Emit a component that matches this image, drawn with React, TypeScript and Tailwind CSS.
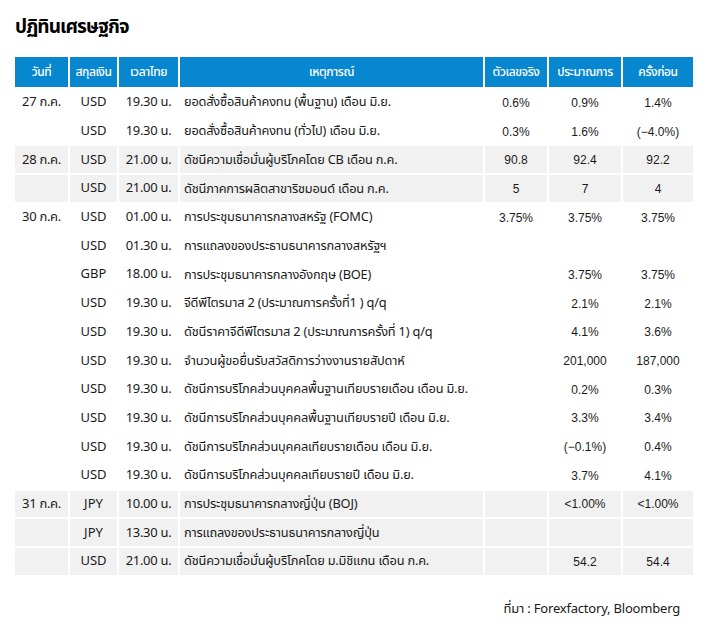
import React from 'react';

interface EventRow {
    date?: string;
    currency: string;
    time: string;
    event: string;
    actual?: string;
    forecast?: string;
    previous?: string;
}

interface DayGroup {
    shaded: boolean;
    rows: EventRow[];
}

const groups: DayGroup[] = [
    {
        shaded: false,
        rows: [
            { date: '27 ก.ค.', currency: 'USD', time: '19.30 น.', event: 'ยอดสั่งซื้อสินค้าคงทน (พื้นฐาน) เดือน มิ.ย.', actual: '0.6%', forecast: '0.9%', previous: '1.4%' },
            { currency: 'USD', time: '19.30 น.', event: 'ยอดสั่งซื้อสินค้าคงทน (ทั่วไป) เดือน มิ.ย.', actual: '0.3%', forecast: '1.6%', previous: '(−4.0%)' },
        ],
    },
    {
        shaded: true,
        rows: [
            { date: '28 ก.ค.', currency: 'USD', time: '21.00 น.', event: 'ดัชนีความเชื่อมั่นผู้บริโภคโดย CB เดือน ก.ค.', actual: '90.8', forecast: '92.4', previous: '92.2' },
            { currency: 'USD', time: '21.00 น.', event: 'ดัชนีภาคการผลิตสาขาริชมอนด์ เดือน ก.ค.', actual: '5', forecast: '7', previous: '4' },
        ],
    },
    {
        shaded: false,
        rows: [
            { date: '30 ก.ค.', currency: 'USD', time: '01.00 น.', event: 'การประชุมธนาคารกลางสหรัฐ (FOMC)', actual: '3.75%', forecast: '3.75%', previous: '3.75%' },
            { currency: 'USD', time: '01.30 น.', event: 'การแถลงของประธานธนาคารกลางสหรัฐฯ' },
            { currency: 'GBP', time: '18.00 น.', event: 'การประชุมธนาคารกลางอังกฤษ (BOE)', forecast: '3.75%', previous: '3.75%' },
            { currency: 'USD', time: '19.30 น.', event: 'จีดีพีไตรมาส 2 (ประมาณการครั้งที่1 ) q/q', forecast: '2.1%', previous: '2.1%' },
            { currency: 'USD', time: '19.30 น.', event: 'ดัชนีราคาจีดีพีไตรมาส 2 (ประมาณการครั้งที่ 1) q/q', forecast: '4.1%', previous: '3.6%' },
            { currency: 'USD', time: '19.30 น.', event: 'จำนวนผู้ขอยื่นรับสวัสดิการว่างงานรายสัปดาห์', forecast: '201,000', previous: '187,000' },
            { currency: 'USD', time: '19.30 น.', event: 'ดัชนีการบริโภคส่วนบุคคลพื้นฐานเทียบรายเดือน เดือน มิ.ย.', forecast: '0.2%', previous: '0.3%' },
            { currency: 'USD', time: '19.30 น.', event: 'ดัชนีการบริโภคส่วนบุคคลพื้นฐานเทียบรายปี เดือน มิ.ย.', forecast: '3.3%', previous: '3.4%' },
            { currency: 'USD', time: '19.30 น.', event: 'ดัชนีการบริโภคส่วนบุคคลเทียบรายเดือน เดือน มิ.ย.', forecast: '(−0.1%)', previous: '0.4%' },
            { currency: 'USD', time: '19.30 น.', event: 'ดัชนีการบริโภคส่วนบุคคลเทียบรายปี เดือน มิ.ย.', forecast: '3.7%', previous: '4.1%' },
        ],
    },
    {
        shaded: true,
        rows: [
            { date: '31 ก.ค.', currency: 'JPY', time: '10.00 น.', event: 'การประชุมธนาคารกลางญี่ปุ่น (BOJ)', forecast: '<1.00%', previous: '<1.00%' },
            { currency: 'JPY', time: '13.30 น.', event: 'การแถลงของประธานธนาคารกลางญี่ปุ่น' },
            { currency: 'USD', time: '21.00 น.', event: 'ดัชนีความเชื่อมั่นผู้บริโภคโดย ม.มิชิแกน เดือน ก.ค.', forecast: '54.2', previous: '54.4' },
        ],
    },
];

const headers = ['วันที่', 'สกุลเงิน', 'เวลาไทย', 'เหตุการณ์', 'ตัวเลขจริง', 'ประมาณการ', 'ครั้งก่อน'];
const widths = ['w-[53px]', 'w-[47px]', 'w-[59px]', 'w-[303px]', 'w-[62px]', 'w-[72px]', 'w-[70px]'];

export default function App() {
    return (
        <div className="w-[706px] h-[635px] bg-white text-[#1a1a1a] font-['Noto_Sans_Thai','Noto_Sans',sans-serif]">
            {/* Title */}
            <h1 className="pl-[15px] pt-[14px] h-[55px] text-[19px] font-bold leading-[28px] tracking-[-0.9px] text-black">
                ปฏิทินเศรษฐกิจ
            </h1>

            <table className="ml-[13px] border-separate border-spacing-[2px] table-fixed">
                <colgroup>
                    {widths.map((w, i) => <col key={i} className={w} />)}
                </colgroup>
                <thead>
                    <tr>
                        {headers.map(h => (
                            <th key={h} className="h-[30px] bg-[#0787cf] text-white text-[12px] font-medium tracking-[-0.4px] text-center p-0">
                                {h}
                            </th>
                        ))}
                    </tr>
                </thead>
                <tbody>
                    {groups.flatMap((g, gi) =>
                        g.rows.map((r, ri) => {
                            const cell = `h-[26.7px] p-0 pt-[1px] leading-none ${g.shaded ? 'bg-[#f1f1f1]' : 'bg-white'}`;
                            return (
                                <tr key={`${gi}-${ri}`}>
                                    <td className={`${cell} text-center text-[13px] tracking-[-0.3px]`}>{r.date}</td>
                                    <td className={`${cell} text-center text-[13px]`}>{r.currency}</td>
                                    <td className={`${cell} text-center text-[13px] tracking-[-0.3px]`}>{r.time}</td>
                                    <td className={`${cell} pl-[4px] text-left text-[12.8px] tracking-[-0.2px] whitespace-nowrap`}>{r.event}</td>
                                    <td className={`${cell} text-center font-['Liberation_Sans',sans-serif] text-[12px]`}>{r.actual}</td>
                                    <td className={`${cell} text-center font-['Liberation_Sans',sans-serif] text-[12px]`}>{r.forecast}</td>
                                    <td className={`${cell} text-center font-['Liberation_Sans',sans-serif] text-[12px]`}>{r.previous}</td>
                                </tr>
                            );
                        })
                    )}
                </tbody>
            </table>

            {/* Source */}
            <p className="mt-[23px] pr-[26px] text-right text-[13px] tracking-[-0.2px]">ที่มา : Forexfactory, Bloomberg</p>
        </div>
    );
}
